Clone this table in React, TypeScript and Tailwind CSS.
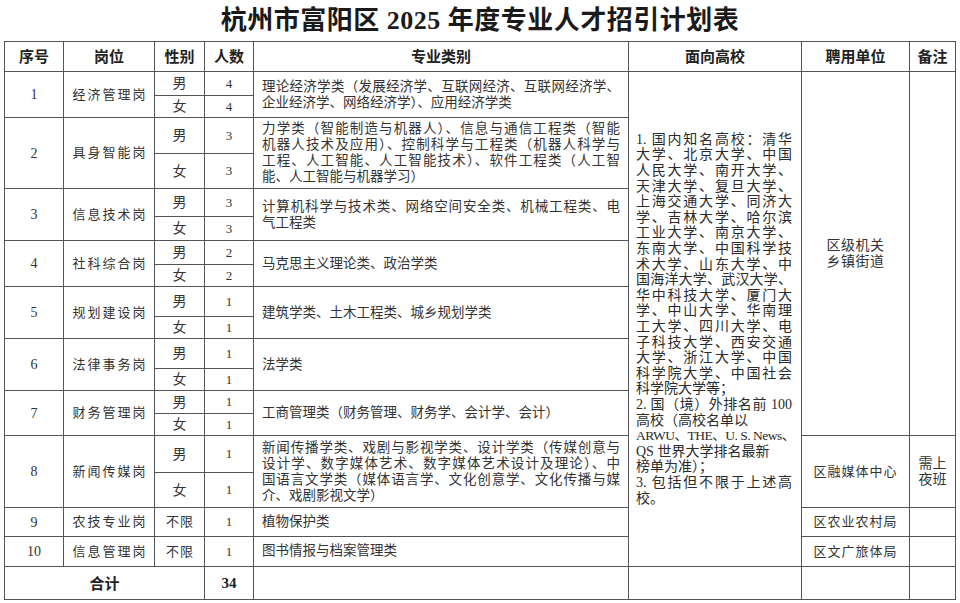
import { ReactNode } from "react";

// justified single line (full width of the cell)
function J({ children }: { children: ReactNode }) {
  return <div className="whitespace-nowrap text-justify [text-align-last:justify]">{children}</div>;
}

// short line, left aligned
function L({ children }: { children: ReactNode }) {
  return <div className="whitespace-nowrap text-left">{children}</div>;
}

function Major({ children }: { children: ReactNode }) {
  return <td rowSpan={2} className="px-[8px] text-[13.5px] leading-[16px] text-[#333]">{children}</td>;
}

function Post({ no, name }: { no: string; name: string }) {
  return (
    <>
      <td rowSpan={2} className="text-center text-[14px] text-[#333]">{no}</td>
      <td rowSpan={2} className="pl-[2px] text-center text-[13px] tracking-[2px] text-[#333]">{name}</td>
    </>
  );
}

function Sex({ s, n }: { s: string; n: number }) {
  return (
    <>
      <td className="text-center text-[14px] text-[#333]">{s}</td>
      <td className="text-center text-[13px] text-[#333]">{n}</td>
    </>
  );
}

export default function App() {
  return (
    <div className="min-h-screen w-[960px] bg-white font-['Liberation_Serif','Noto_Sans_CJK_SC',serif] text-[#333]">
      <h1 className="flex h-[41px] items-center justify-center text-[26px] font-bold tracking-[0.5px] text-[#1a1a1a]">
        杭州市富阳区 2025 年度专业人才招引计划表
      </h1>
      <table className="ml-[4px] w-[951px] table-fixed border-collapse [&_td]:border-[1.5px] [&_td]:border-[#555] [&_th]:border-[1.5px] [&_th]:border-[#555]">
        <colgroup>
          <col className="w-[59px]" />
          <col className="w-[91px]" />
          <col className="w-[50px]" />
          <col className="w-[49px]" />
          <col className="w-[375px]" />
          <col className="w-[173px]" />
          <col className="w-[108px]" />
          <col className="w-[46px]" />
        </colgroup>
        <thead>
          <tr className="h-[30px] font-['Noto_Sans_CJK_SC',sans-serif] text-[15px] font-medium text-[#222]">
            <th>序号</th>
            <th>岗位</th>
            <th>性别</th>
            <th>人数</th>
            <th>专业类别</th>
            <th>面向高校</th>
            <th>聘用单位</th>
            <th>备注</th>
          </tr>
        </thead>
        <tbody>
          {/* 1 */}
          <tr className="h-[24px]">
            <Post no="1" name="经济管理岗" />
            <Sex s="男" n={4} />
            <Major>
              <J>理论经济学类（发展经济学、互联网经济、互联网经济学、</J>
              <L>企业经济学、网络经济学）、应用经济学类</L>
            </Major>
            <td rowSpan={18} className="pl-[7px] pr-[9px] text-[14px] leading-[15.6px] text-[#2b2b2b]">
              <J>1. 国内知名高校：清华</J>
              <J>大学、北京大学、中国</J>
              <J>人民大学、南开大学、</J>
              <J>天津大学、复旦大学、</J>
              <J>上海交通大学、同济大</J>
              <J>学、吉林大学、哈尔滨</J>
              <J>工业大学、南京大学、</J>
              <J>东南大学、中国科学技</J>
              <J>术大学、山东大学、中</J>
              <J>国海洋大学、武汉大学、</J>
              <J>华中科技大学、厦门大</J>
              <J>学、中山大学、华南理</J>
              <J>工大学、四川大学、电</J>
              <J>子科技大学、西安交通</J>
              <J>大学、浙江大学、中国</J>
              <J>科学院大学、中国社会</J>
              <L>科学院大学等；</L>
              <J>2. 国（境）外排名前 100</J>
              <L>高校（高校名单以</L>
              <div className="whitespace-nowrap text-justify text-[13.5px] tracking-[-0.5px] [text-align-last:justify]">ARWU、THE、U. S. News、</div>
              <L>QS 世界大学排名最新</L>
              <L>榜单为准）；</L>
              <J>3. 包括但不限于上述高</J>
              <L>校。</L>
            </td>
            <td rowSpan={14} className="text-center text-[14px] leading-[16px] tracking-[0.5px] text-[#333]">
              <div>区级机关</div>
              <div>乡镇街道</div>
            </td>
            <td rowSpan={14}></td>
          </tr>
          <tr className="h-[22px]">
            <Sex s="女" n={4} />
          </tr>

          {/* 2 */}
          <tr className="h-[36px]">
            <Post no="2" name="具身智能岗" />
            <Sex s="男" n={3} />
            <Major>
              <J>力学类（智能制造与机器人）、信息与通信工程类（智能</J>
              <J>机器人技术及应用）、控制科学与工程类（机器人科学与</J>
              <J>工程、人工智能、人工智能技术）、软件工程类（人工智</J>
              <L>能、人工智能与机器学习）</L>
            </Major>
          </tr>
          <tr className="h-[35px]">
            <Sex s="女" n={3} />
          </tr>

          {/* 3 */}
          <tr className="h-[28px]">
            <Post no="3" name="信息技术岗" />
            <Sex s="男" n={3} />
            <Major>
              <J>计算机科学与技术类、网络空间安全类、机械工程类、电</J>
              <L>气工程类</L>
            </Major>
          </tr>
          <tr className="h-[24px]">
            <Sex s="女" n={3} />
          </tr>

          {/* 4 */}
          <tr className="h-[24px]">
            <Post no="4" name="社科综合岗" />
            <Sex s="男" n={2} />
            <Major>
              <L>马克思主义理论类、政治学类</L>
            </Major>
          </tr>
          <tr className="h-[21px]">
            <Sex s="女" n={2} />
          </tr>

          {/* 5 */}
          <tr className="h-[30px]">
            <Post no="5" name="规划建设岗" />
            <Sex s="男" n={1} />
            <Major>
              <L>建筑学类、土木工程类、城乡规划学类</L>
            </Major>
          </tr>
          <tr className="h-[22px]">
            <Sex s="女" n={1} />
          </tr>

          {/* 6 */}
          <tr className="h-[30px]">
            <Post no="6" name="法律事务岗" />
            <Sex s="男" n={1} />
            <Major>
              <L>法学类</L>
            </Major>
          </tr>
          <tr className="h-[22px]">
            <Sex s="女" n={1} />
          </tr>

          {/* 7 */}
          <tr className="h-[23px]">
            <Post no="7" name="财务管理岗" />
            <Sex s="男" n={1} />
            <Major>
              <L>工商管理类（财务管理、财务学、会计学、会计）</L>
            </Major>
          </tr>
          <tr className="h-[22px]">
            <Sex s="女" n={1} />
          </tr>

          {/* 8 */}
          <tr className="h-[37px]">
            <Post no="8" name="新闻传媒岗" />
            <Sex s="男" n={1} />
            <Major>
              <J>新闻传播学类、戏剧与影视学类、设计学类（传媒创意与</J>
              <J>设计学、数字媒体艺术、数字媒体艺术设计及理论）、中</J>
              <J>国语言文学类（媒体语言学、文化创意学、文化传播与媒</J>
              <L>介、戏剧影视文学）</L>
            </Major>
            <td rowSpan={2} className="text-center text-[13px] tracking-[1px] text-[#333]">
              区融媒体中心
            </td>
            <td rowSpan={2} className="text-center text-[14px] leading-[16px] text-[#333]">
              <div>需上</div>
              <div>夜班</div>
            </td>
          </tr>
          <tr className="h-[35px]">
            <Sex s="女" n={1} />
          </tr>

          {/* 9 */}
          <tr className="h-[29px]">
            <td className="text-center text-[14px]">9</td>
            <td className="pl-[2px] text-center text-[13px] tracking-[2px]">农技专业岗</td>
            <td className="pl-[1px] text-center text-[13px] tracking-[1px]">不限</td>
            <td className="text-center text-[13px]">1</td>
            <td className="px-[8px] text-[13.5px]">植物保护类</td>
            <td className="text-center text-[13px] tracking-[1px]">区农业农村局</td>
            <td></td>
          </tr>

          {/* 10 */}
          <tr className="h-[30px]">
            <td className="text-center text-[14px]">10</td>
            <td className="pl-[2px] text-center text-[13px] tracking-[2px]">信息管理岗</td>
            <td className="pl-[1px] text-center text-[13px] tracking-[1px]">不限</td>
            <td className="text-center text-[13px]">1</td>
            <td className="px-[8px] text-[13.5px]">图书情报与档案管理类</td>
            <td className="text-center text-[13px] tracking-[1px]">区文广旅体局</td>
            <td></td>
          </tr>

          {/* total */}
          <tr className="h-[33px]">
            <td colSpan={3} className="text-center font-['Noto_Sans_CJK_SC',sans-serif] text-[15px] font-bold text-[#222]">
              合计
            </td>
            <td className="text-center text-[15px] font-bold text-[#222]">34</td>
            <td></td>
            <td></td>
            <td></td>
            <td></td>
          </tr>
        </tbody>
      </table>
    </div>
  );
}
